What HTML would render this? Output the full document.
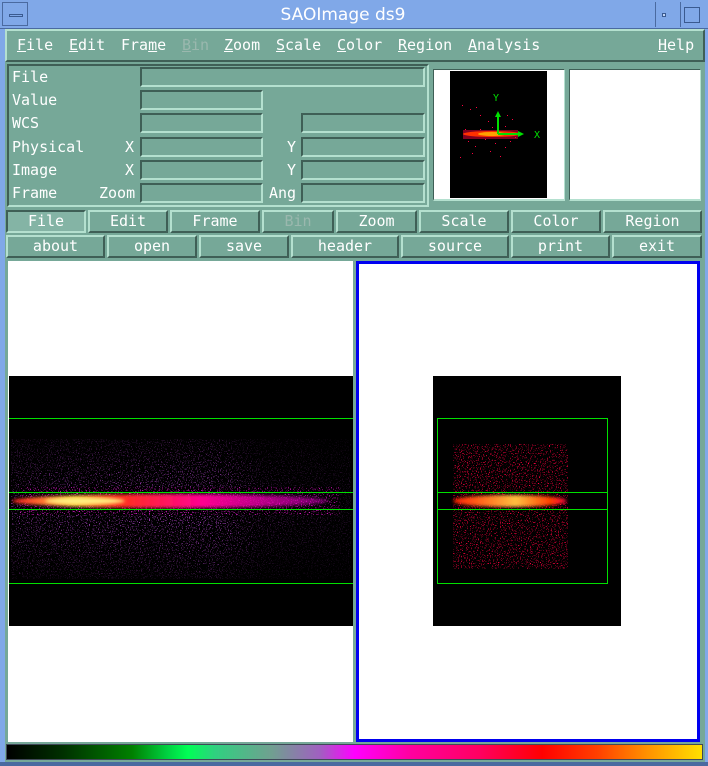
<!DOCTYPE html>
<html><head><meta charset="utf-8"><style>
*{margin:0;padding:0;box-sizing:border-box}
body{width:708px;height:766px;background:#80a8e8;position:relative;overflow:hidden;font-family:"DejaVu Sans Mono","Liberation Mono",monospace;font-size:15px;color:#fff}
.a{position:absolute}
.t{background:#76a898}
.raised{border:2px solid;border-color:#b4e0cf #3f5f56 #3f5f56 #b4e0cf}
.sunk{border:2px solid;border-color:#3f5f56 #b4e0cf #b4e0cf #3f5f56}
.fld{position:absolute;height:20px;border:2px solid;border-color:#3f5f56 #b4e0cf #b4e0cf #3f5f56;background:#76a898}
.lbl{position:absolute;line-height:20px}
.btn{position:absolute;height:23px;border:2px solid;border-color:#b4e0cf #3f5f56 #3f5f56 #b4e0cf;background:#76a898;text-align:center;line-height:19px;font-size:15px}
.m{position:absolute;top:36px;line-height:18px}
u{text-decoration:underline}
</style></head><body>
<div class="a" style="left:0;top:0;width:708px;height:29px;background:#80a8e8;border-bottom:1px solid #4a6aa0"></div>
<div class="a" style="left:2px;top:2px;width:26px;height:24px;border:1px solid #4a6aa0"></div>
<div class="a" style="left:9px;top:14px;width:14px;height:3px;border:1px solid #3a5a90"></div>
<div class="a" style="left:238px;top:4px;width:210px;text-align:center;font-family:'DejaVu Sans','Liberation Sans',sans-serif;font-size:17px;line-height:22px">SAOImage ds9</div>
<div class="a" style="left:655px;top:2px;width:24px;height:25px;border-left:1px solid #4a6aa0"></div>
<div class="a" style="left:662px;top:13px;width:4px;height:4px;border:1px solid #3a5a90;background:#c0d4f4"></div>
<div class="a" style="left:680px;top:2px;width:26px;height:25px;border-left:1px solid #4a6aa0"></div>
<div class="a" style="left:684px;top:7px;width:16px;height:16px;border:1px solid #3a5a90"></div>

<div class="a t" style="left:5px;top:29px;width:700px;height:734px"></div>
<div class="a t raised" style="left:5px;top:29px;width:700px;height:33px"></div>
<div class="m" style="left:17px"><u>F</u>ile</div>
<div class="m" style="left:69px"><u>E</u>dit</div>
<div class="m" style="left:121px">Fra<u>m</u>e</div>
<div class="m" style="left:182px;color:#9ab8ae"><u>B</u>in</div>
<div class="m" style="left:224px"><u>Z</u>oom</div>
<div class="m" style="left:276px"><u>S</u>cale</div>
<div class="m" style="left:337px"><u>C</u>olor</div>
<div class="m" style="left:398px"><u>R</u>egion</div>
<div class="m" style="left:468px"><u>A</u>nalysis</div>
<div class="m" style="left:658px"><u>H</u>elp</div>

<div class="a sunk" style="left:7px;top:64px;width:422px;height:143px"></div>
<div class="lbl" style="left:12px;top:67px">File</div>
<div class="lbl" style="left:12px;top:90px">Value</div>
<div class="lbl" style="left:12px;top:113px">WCS</div>
<div class="lbl" style="left:12px;top:137px">Physical</div>
<div class="lbl" style="left:125px;top:137px">X</div>
<div class="lbl" style="left:287px;top:137px">Y</div>
<div class="lbl" style="left:12px;top:160px">Image</div>
<div class="lbl" style="left:125px;top:160px">X</div>
<div class="lbl" style="left:287px;top:160px">Y</div>
<div class="lbl" style="left:12px;top:183px">Frame</div>
<div class="lbl" style="left:99px;top:183px">Zoom</div>
<div class="lbl" style="left:269px;top:183px">Ang</div>
<div class="fld" style="left:140px;top:67px;width:285px"></div>
<div class="fld" style="left:140px;top:90px;width:123px"></div>
<div class="fld" style="left:140px;top:113px;width:123px"></div>
<div class="fld" style="left:301px;top:113px;width:124px"></div>
<div class="fld" style="left:140px;top:137px;width:123px"></div>
<div class="fld" style="left:301px;top:137px;width:124px"></div>
<div class="fld" style="left:140px;top:160px;width:123px"></div>
<div class="fld" style="left:301px;top:160px;width:124px"></div>
<div class="fld" style="left:140px;top:183px;width:123px"></div>
<div class="fld" style="left:301px;top:183px;width:124px"></div>

<div class="a sunk" style="left:433px;top:69px;width:132px;height:132px;background:#fff;border-width:1px 1px 2px 1px"></div>
<svg class="a" style="left:450px;top:71px" width="97" height="127">
<rect width="97" height="127" fill="#000"/>
<g fill="#ff0040"><rect x="12" y="34" width="1" height="1"/><rect x="20" y="38" width="1" height="1"/><rect x="26" y="36" width="1" height="1"/><rect x="30" y="44" width="1" height="1"/><rect x="38" y="50" width="1" height="1"/><rect x="55" y="55" width="1" height="1"/><rect x="60" y="70" width="1" height="1"/><rect x="25" y="75" width="1" height="1"/><rect x="40" y="80" width="1" height="1"/><rect x="50" y="85" width="1" height="1"/><rect x="35" y="68" width="1" height="1"/><rect x="15" y="58" width="1" height="1"/><rect x="62" y="48" width="1" height="1"/><rect x="18" y="70" width="1" height="1"/><rect x="45" y="72" width="1" height="1"/><rect x="55" y="76" width="1" height="1"/><rect x="10" y="86" width="1" height="1"/><rect x="30" y="58" width="1" height="1"/><rect x="42" y="56" width="1" height="1"/><rect x="65" y="66" width="1" height="1"/><rect x="22" y="82" width="1" height="1"/><rect x="57" y="44" width="1" height="1"/></g>
<rect x="13" y="59" width="55" height="9" fill="#ff0040" opacity="0.5"/>
<ellipse cx="42" cy="63" rx="29" ry="3" fill="#ff3000"/>
<ellipse cx="42" cy="63" rx="14" ry="2" fill="#ffa000"/>
<path d="M48 63V43M48 63H71" stroke="#00e000" stroke-width="2"/>
<path d="M45 46L48 40L51 46ZM68 60L74 63L68 66Z" fill="#00e000"/>
<text x="43" y="30" fill="#00e000" font-size="10" font-family="DejaVu Sans Mono">Y</text>
<text x="84" y="67" fill="#00e000" font-size="10" font-family="DejaVu Sans Mono">X</text>
</svg>
<div class="a sunk" style="left:569px;top:69px;width:132px;height:132px;background:#fff;border-width:1px 1px 2px 1px"></div>

<div class="btn sunk" style="left:6px;top:210px;width:80px;border-color:#3f5f56 #b4e0cf #b4e0cf #3f5f56;background:#84b4a5">File</div>
<div class="btn" style="left:88px;top:210px;width:80px">Edit</div>
<div class="btn" style="left:170px;top:210px;width:90px">Frame</div>
<div class="btn" style="left:262px;top:210px;width:72px;color:#9ab8ae">Bin</div>
<div class="btn" style="left:336px;top:210px;width:81px">Zoom</div>
<div class="btn" style="left:419px;top:210px;width:90px">Scale</div>
<div class="btn" style="left:511px;top:210px;width:90px">Color</div>
<div class="btn" style="left:603px;top:210px;width:99px">Region</div>
<div class="btn" style="left:6px;top:235px;width:99px">about</div>
<div class="btn" style="left:107px;top:235px;width:90px">open</div>
<div class="btn" style="left:199px;top:235px;width:90px">save</div>
<div class="btn" style="left:291px;top:235px;width:108px">header</div>
<div class="btn" style="left:401px;top:235px;width:108px">source</div>
<div class="btn" style="left:511px;top:235px;width:99px">print</div>
<div class="btn" style="left:612px;top:235px;width:90px">exit</div>

<svg class="a" style="left:5px;top:259px" width="700" height="485">
<defs>
<filter id="sp" x="0" y="0" width="100%" height="100%">
<feTurbulence type="fractalNoise" baseFrequency="0.9" numOctaves="1" seed="3" result="n"/>
<feColorMatrix in="n" type="matrix" values="0 0 0 0 0 0 0 0 0 0 0 0 0 0 0 14 0 0 0 -8.5" result="m"/>
<feComposite in="SourceGraphic" in2="m" operator="in"/>
</filter>
<linearGradient id="pgx" x1="0" x2="1"><stop offset="0" stop-color="#d050f0" stop-opacity="0.7"/><stop offset="0.6" stop-color="#d050f0" stop-opacity="1"/><stop offset="0.75" stop-color="#d050f0" stop-opacity="0.4"/><stop offset="1" stop-color="#d050f0" stop-opacity="0.25"/></linearGradient>
<linearGradient id="pgy" x1="0" x2="0" y1="0" y2="1"><stop offset="0" stop-color="#fff" stop-opacity="0.3"/><stop offset="0.5" stop-color="#fff" stop-opacity="1"/><stop offset="1" stop-color="#fff" stop-opacity="0.3"/></linearGradient>
<mask id="my"><rect x="0" y="180" width="348" height="140" fill="url(#pgy)"/></mask>
<linearGradient id="st" x1="0" x2="1"><stop offset="0" stop-color="#ff2020"/><stop offset="0.2" stop-color="#ffd040"/><stop offset="0.35" stop-color="#ff3020"/><stop offset="0.6" stop-color="#ff0090"/><stop offset="1" stop-color="#e000d0" stop-opacity="0.5"/></linearGradient>
<linearGradient id="st2" x1="0" x2="1"><stop offset="0" stop-color="#ff2000"/><stop offset="0.55" stop-color="#ffc040"/><stop offset="0.85" stop-color="#ff4000"/><stop offset="1" stop-color="#ff0040"/></linearGradient>
<filter id="bl"><feGaussianBlur stdDeviation="1.5"/></filter>
</defs>
<rect x="0" y="0" width="700" height="485" fill="#76a898"/>
<rect x="3" y="2" width="345" height="481" fill="#fff"/>
<rect x="351" y="2" width="344" height="481" fill="#0000f0"/>
<rect x="354" y="5" width="338" height="475" fill="#fff"/>
<rect x="4" y="117" width="344" height="250" fill="#000"/>
<g mask="url(#my)"><rect x="6" y="180" width="340" height="140" fill="url(#pgx)" filter="url(#sp)"/></g>
<rect x="15" y="228" width="320" height="28" fill="#ff10e0" filter="url(#sp)" opacity="0.8"/>
<ellipse cx="165" cy="242" rx="158" ry="7" fill="url(#st)" filter="url(#bl)"/>
<ellipse cx="80" cy="242" rx="40" ry="3" fill="#fff080" filter="url(#bl)"/>
<g stroke="#00e000" stroke-width="1" fill="none">
<path d="M4 159.5H348M4 233.5H348M4 250.5H348M4 324.5H348"/>
</g>
<rect x="428" y="117" width="188" height="250" fill="#000"/>
<rect x="448" y="185" width="115" height="125" fill="#ff0040" filter="url(#sp)"/>
<rect x="448" y="233" width="115" height="16" fill="#ff0040" filter="url(#sp)"/>
<ellipse cx="505" cy="242" rx="57" ry="6" fill="url(#st2)" filter="url(#bl)"/>
<g stroke="#00e000" stroke-width="1" fill="none">
<rect x="432.5" y="159.5" width="170" height="165"/>
<path d="M432 233.5H603M432 250.5H603"/>
</g>
</svg>

<div class="a" style="left:5px;top:742px;width:700px;height:20px;background:#76a898"></div>
<div class="a" style="left:6px;top:744px;width:697px;height:16px;border:1px solid #404858;background:linear-gradient(to right,#000 0%,#003000 8%,#008000 18%,#00d040 23%,#00ff55 26%,#30d080 30%,#70a090 38%,#a060c0 45%,#ff00ff 50%,#ff00a0 58%,#ff0060 68%,#ff0000 77%,#ff4000 85%,#ff9000 92%,#ffe000 100%)"></div>
<div class="a" style="left:0;top:762px;width:708px;height:4px;background:#4a6aa0"></div>
</body></html>
